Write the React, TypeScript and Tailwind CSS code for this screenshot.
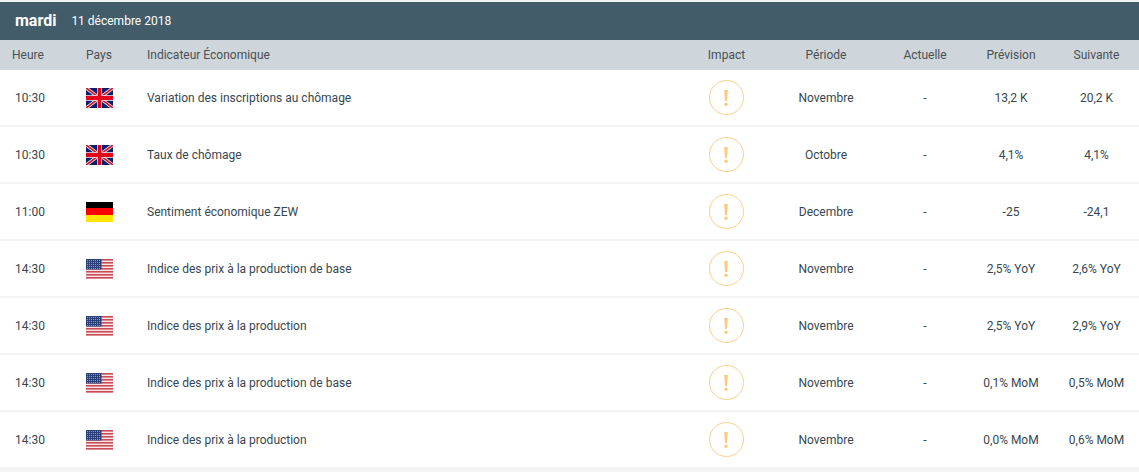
const cols = 'grid grid-cols-[72px_54px_556px_88px_112px_86px_86px_85px] items-center';

const UkFlag = () => (
  <svg width="27" height="20" viewBox="0 0 60 40" preserveAspectRatio="none" className="block">
    <rect width="60" height="40" fill="#0a1f6b" />
    <path d="M0 0L60 40M60 0L0 40" stroke="#f4e4e6" strokeWidth="7" />
    <path d="M0 0L60 40M60 0L0 40" stroke="#d0182f" strokeWidth="3.6" />
    <path d="M30 0V40M0 20H60" stroke="#fbeeee" strokeWidth="11" />
    <path d="M30 0V40M0 20H60" stroke="#e4001b" strokeWidth="8" />
  </svg>
);

const DeFlag = () => (
  <div className="flex h-5 w-[27px] flex-col">
    <div className="h-[6px] bg-black" />
    <div className="h-[7px] bg-[#fe0000]" />
    <div className="h-[7px] bg-[#ffe600]" />
  </div>
);

const UsFlag = () => (
  <svg width="27" height="20" viewBox="0 0 27 20" className="block">
    <rect width="27" height="20" fill="#f8e6e6" />
    {[0, 3, 6, 9, 12, 15, 18].map((y) => (
      <rect key={y} y={y} width="27" height="1.6" fill="#cb4c58" />
    ))}
    <rect width="15.5" height="10.5" fill="#2b3f78" />
    {[1, 3, 5, 7, 9].map((y) =>
      [1, 3, 5, 7, 9, 11, 13].map((x) => (
        <rect key={`${x}-${y}`} x={x} y={y} width="1" height="1" fill="#8b97bd" />
      )),
    )}
  </svg>
);

const flags = { uk: <UkFlag />, de: <DeFlag />, us: <UsFlag /> };

const rows = [
  { time: '10:30', flag: 'uk', name: 'Variation des inscriptions au chômage', period: 'Novembre', prev: '13,2 K', next: '20,2 K' },
  { time: '10:30', flag: 'uk', name: 'Taux de chômage', period: 'Octobre', prev: '4,1%', next: '4,1%' },
  { time: '11:00', flag: 'de', name: 'Sentiment économique ZEW', period: 'Decembre', prev: '-25', next: '-24,1' },
  { time: '14:30', flag: 'us', name: 'Indice des prix à la production de base', period: 'Novembre', prev: '2,5% YoY', next: '2,6% YoY' },
  { time: '14:30', flag: 'us', name: 'Indice des prix à la production', period: 'Novembre', prev: '2,5% YoY', next: '2,9% YoY' },
  { time: '14:30', flag: 'us', name: 'Indice des prix à la production de base', period: 'Novembre', prev: '0,1% MoM', next: '0,5% MoM' },
  { time: '14:30', flag: 'us', name: 'Indice des prix à la production', period: 'Novembre', prev: '0,0% MoM', next: '0,6% MoM' },
] as const;

const App = () => {
  return (
    <div className="h-[472px] w-[1139px] overflow-hidden bg-[#f3f3f3] pt-[2px] font-['Roboto',sans-serif] text-[12px] text-[#37474f]">
      <div className="flex h-[38px] items-center bg-[#425c69] pl-[15px] text-white">
        <span className="text-[16px] font-bold">mardi</span>
        <span className="ml-[15px]">11 décembre 2018</span>
      </div>
      <div className={`${cols} h-[30px] bg-[#ced6dc] text-center text-[#4a4f52]`}>
        <div className="pl-3 text-left">Heure</div>
        <div>Pays</div>
        <div className="pl-[21px] text-left">Indicateur Économique</div>
        <div className="pl-px">Impact</div>
        <div>Période</div>
        <div>Actuelle</div>
        <div>Prévision</div>
        <div>Suivante</div>
      </div>
      {rows.map((row, i) => (
        <div key={i} className={`${cols} mb-[2px] h-[55px] bg-white text-center`}>
          <div className="pl-[15px] text-left">{row.time}</div>
          <div className="flex justify-center">{flags[row.flag]}</div>
          <div className="pl-[21px] text-left">{row.name}</div>
          <div className="flex justify-center">
            <div className="flex h-[35px] w-[35px] items-center justify-center rounded-full border border-[#fdd08c]">
              <svg width="6" height="18" viewBox="0 0 6 18">
                <path d="M1.2 1h3.6L4 12H2z" fill="#fdc97c" />
                <circle cx="3" cy="15.2" r="1.7" fill="#fdc97c" />
              </svg>
            </div>
          </div>
          <div>{row.period}</div>
          <div>-</div>
          <div>{row.prev}</div>
          <div>{row.next}</div>
        </div>
      ))}
    </div>
  );
};

export default App;
